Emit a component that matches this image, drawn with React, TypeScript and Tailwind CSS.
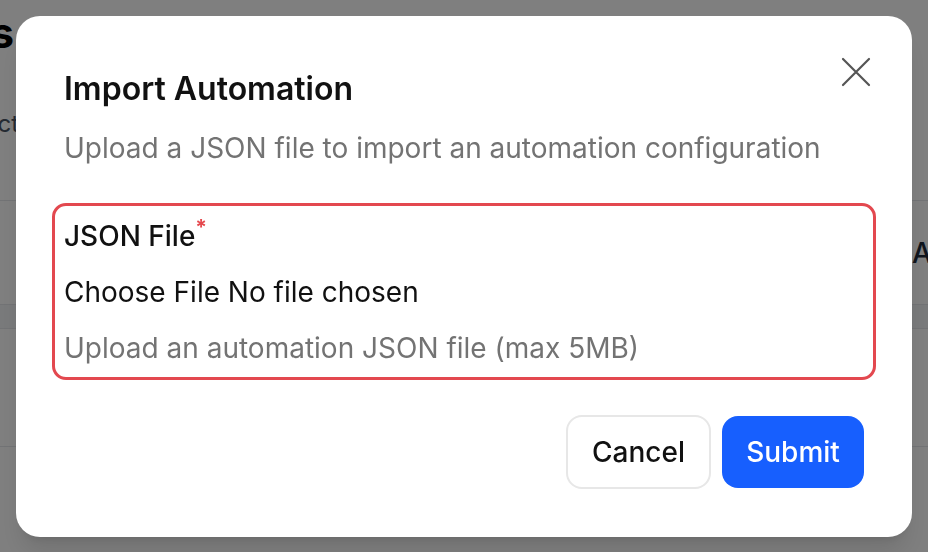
import { useState } from "react";

const font = { fontFamily: "Inter, 'Noto Sans', sans-serif" };

const BackgroundPage = () => {
  return (
    <div className="h-[552px] w-[928px] overflow-hidden bg-white">
      <div className="flex w-[14px] justify-end pt-[8px]">
        <h1 className="whitespace-nowrap text-[42px] font-bold leading-[50px] text-black">
          Automations
        </h1>
      </div>
      <div className="mt-[50px] flex w-[19px] justify-end">
        <p className="whitespace-nowrap text-[24px] leading-[32px] text-gray-600">
          Build and connect
        </p>
      </div>
      <div className="mt-[60px] border-t border-gray-200">
        <div className="flex h-[103px] items-center">
          <div className="w-[912px] shrink-0" />
          <span className="whitespace-nowrap text-[28px] font-medium text-gray-800">Actions</span>
        </div>
        <div className="h-[24px] border-t border-gray-200 bg-gray-100" />
        <div className="h-[118px] border-t border-gray-200" />
        <div className="border-t border-gray-200" />
      </div>
    </div>
  );
};

const App = () => {
  const [open] = useState(true);

  return (
    <div className="relative h-[552px] w-[928px] overflow-hidden" style={font}>
      <BackgroundPage />
      {open && (
        <div className="fixed inset-0 flex items-center justify-center bg-black/50">
          <div className="relative w-[896px] rounded-[24px] bg-white px-[48px] pb-[48px] pt-[53px] shadow-xl">
            <button className="absolute right-[40px] top-[40px] text-[#555]">
              <svg width="32" height="32" viewBox="0 0 32 32" fill="none" stroke="currentColor" strokeWidth="2.2" strokeLinecap="round">
                <path d="M3 3 29 29M29 3 3 29" />
              </svg>
            </button>

            <h2 className="text-[32px] font-semibold leading-[40px] text-[#111]">Import Automation</h2>
            <p className="mt-[21px] text-[28px] leading-[36px] text-[#737373]">
              Upload a JSON file to import an automation configuration
            </p>

            <div className="-mx-[12px] mt-[37px] rounded-[14px] border-[3px] border-[#e3484f] px-[9px] pb-[11px] pt-[12px]">
              <div className="space-y-[20px]">
                <label className="block text-[28px] font-medium leading-[36px] text-[#111]">
                  JSON File
                  <sup className="text-[21px] font-bold text-[#e5484d]">*</sup>
                </label>
                <div className="text-[28px] leading-[36px] text-[#111]">
                  <span>Choose File</span> <span>No file chosen</span>
                </div>
                <p className="text-[28px] leading-[36px] text-[#737373]">
                  Upload an automation JSON file (max 5MB)
                </p>
              </div>
            </div>

            <div className="mt-[35px] flex justify-end gap-[11px]">
              <button className="h-[74px] w-[145px] rounded-[16px] border-2 border-[#e7e7e7] bg-white text-[28px] font-medium text-[#111]">
                Cancel
              </button>
              <button className="my-auto h-[72px] w-[142px] rounded-[16px] bg-[#175ffe] text-[28px] font-medium text-white">
                Submit
              </button>
            </div>
          </div>
        </div>
      )}
    </div>
  );
};

export default App;
